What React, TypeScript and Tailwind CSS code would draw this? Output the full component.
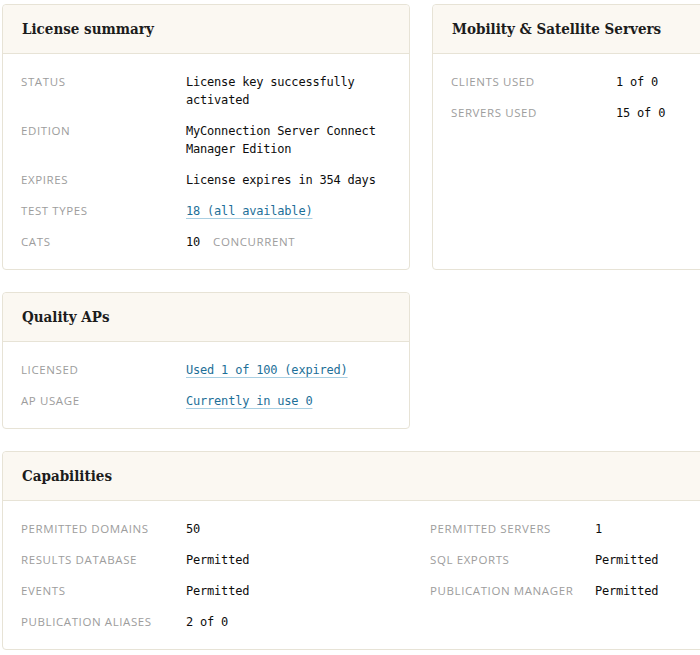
import React from "react";

type Row = { label: string; value: React.ReactNode };

const mono = "font-['DejaVu_Sans_Mono',monospace] text-[12px] tracking-[-0.2px] text-[#0d0d0d]";
const labelCls =
  "font-['Open_Sans',sans-serif] text-[11.5px] uppercase tracking-[0.6px] text-[#9d9d9d] leading-[18px]";

function Link({ children }: { children: React.ReactNode }) {
  return (
    <a
      href="#"
      className="text-[#1d6f98] underline decoration-[#a9cfe2] decoration-1 underline-offset-[3px]"
    >
      {children}
    </a>
  );
}

function Card({
  title,
  className = "",
  children,
}: {
  title: string;
  className?: string;
  children: React.ReactNode;
}) {
  return (
    <div className={"rounded-[4px] border border-[#e7e3d6] bg-white " + className}>
      <div className="flex h-[49px] items-center rounded-t-[4px] border-b border-[#e7e3d6] bg-[#fbf8f2] px-[19px]">
        <h2 className="font-['DejaVu_Serif_Condensed','Liberation_Serif',serif] text-[15px] font-bold text-[#1c1c1c]">
          {title}
        </h2>
      </div>
      <div className="px-[18px] pb-[18px] pt-[19px]">{children}</div>
    </div>
  );
}

function Rows({ rows }: { rows: Row[] }) {
  return (
    <div className="flex flex-col gap-[13px]">
      {rows.map((r) => (
        <div key={r.label} className="flex">
          <div className={labelCls + " w-[165px] shrink-0"}>{r.label}</div>
          <div className={mono + " leading-[18px]"}>{r.value}</div>
        </div>
      ))}
    </div>
  );
}

export default function App() {
  const license: Row[] = [
    { label: "Status", value: "License key successfully activated" },
    { label: "Edition", value: "MyConnection Server Connect Manager Edition" },
    { label: "Expires", value: "License expires in 354 days" },
    { label: "Test Types", value: <Link>18 (all available)</Link> },
    {
      label: "Cats",
      value: (
        <span>
          10 <span className={labelCls + " ml-[6px]"}>Concurrent</span>
        </span>
      ),
    },
  ];

  const mobility: Row[] = [
    { label: "Clients Used", value: "1 of 0" },
    { label: "Servers Used", value: "15 of 0" },
  ];

  const quality: Row[] = [
    { label: "Licensed", value: <Link>Used 1 of 100 (expired)</Link> },
    { label: "AP Usage", value: <Link>Currently in use 0</Link> },
  ];

  const capsLeft: Row[] = [
    { label: "Permitted Domains", value: "50" },
    { label: "Results Database", value: "Permitted" },
    { label: "Events", value: "Permitted" },
    { label: "Publication Aliases", value: "2 of 0" },
  ];
  const capsRight: Row[] = [
    { label: "Permitted Servers", value: "1" },
    { label: "SQL Exports", value: "Permitted" },
    { label: "Publication Manager", value: "Permitted" },
  ];

  return (
    <div className="h-[655px] w-[700px] overflow-hidden bg-white">
      <div className="grid w-[840px] grid-cols-[408px_408px] gap-[22px] pl-[2px] pt-[4px]">
        <Card title="License summary">
          <div className="w-[370px]">
            <Rows rows={license} />
          </div>
        </Card>
        <Card title="Mobility & Satellite Servers">
          <Rows rows={mobility} />
        </Card>
        <Card title="Quality APs">
          <Rows rows={quality} />
        </Card>
        <div />
        <Card title="Capabilities" className="col-span-2">
          <div className="grid grid-cols-[409px_1fr]">
            <Rows rows={capsLeft} />
            <Rows rows={capsRight} />
          </div>
        </Card>
      </div>
    </div>
  );
}
